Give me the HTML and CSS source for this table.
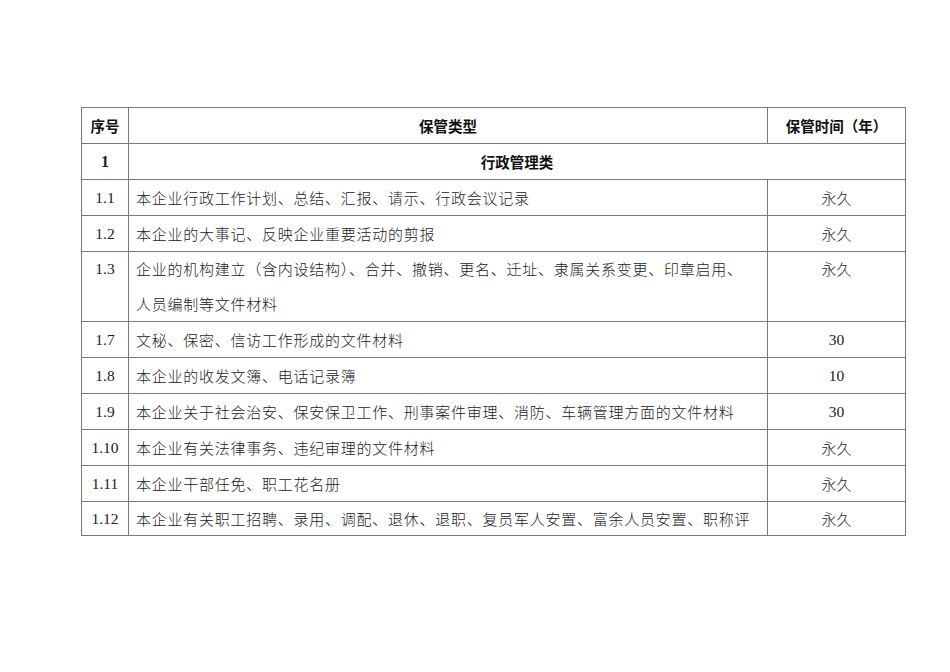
FILE: index.html
```html
<!DOCTYPE html>
<html lang="zh-CN">
<head>
<meta charset="utf-8">
<title>保管期限表</title>
<link rel="stylesheet" href="styles.css">
</head>
<body>
<div class="page">
<table class="grid">
  <colgroup>
    <col class="c-no">
    <col class="c-type">
    <col class="c-time">
  </colgroup>
  <tr class="head">
    <th>序号</th>
    <th>保管类型</th>
    <th>保管时间（年）</th>
  </tr>
  <tr class="group">
    <td class="no num bold">1</td>
    <td colspan="2" class="gtitle">行政管理类</td>
  </tr>
  <tr>
    <td class="no num">1.1</td>
    <td class="txt">本企业行政工作计划、总结、汇报、请示、行政会议记录</td>
    <td class="val">永久</td>
  </tr>
  <tr>
    <td class="no num">1.2</td>
    <td class="txt">本企业的大事记、反映企业重要活动的剪报</td>
    <td class="val">永久</td>
  </tr>
  <tr class="double">
    <td class="no num top">1.3</td>
    <td class="txt">企业的机构建立（含内设结构）、合并、撤销、更名、迁址、隶属关系变更、印章启用、<br>人员编制等文件材料</td>
    <td class="val top">永久</td>
  </tr>
  <tr>
    <td class="no num">1.7</td>
    <td class="txt">文秘、保密、信访工作形成的文件材料</td>
    <td class="val num">30</td>
  </tr>
  <tr>
    <td class="no num">1.8</td>
    <td class="txt">本企业的收发文簿、电话记录簿</td>
    <td class="val num">10</td>
  </tr>
  <tr>
    <td class="no num">1.9</td>
    <td class="txt">本企业关于社会治安、保安保卫工作、刑事案件审理、消防、车辆管理方面的文件材料</td>
    <td class="val num">30</td>
  </tr>
  <tr>
    <td class="no num">1.10</td>
    <td class="txt">本企业有关法律事务、违纪审理的文件材料</td>
    <td class="val">永久</td>
  </tr>
  <tr>
    <td class="no num">1.11</td>
    <td class="txt">本企业干部任免、职工花名册</td>
    <td class="val">永久</td>
  </tr>
  <tr class="last">
    <td class="no num">1.12</td>
    <td class="txt">本企业有关职工招聘、录用、调配、退休、退职、复员军人安置、富余人员安置、职称评</td>
    <td class="val">永久</td>
  </tr>
</table>
</div>
</body>
</html>
```
FILE: styles.css
```css
html, body {
  margin: 0;
  padding: 0;
  background: #ffffff;
}
.page {
  padding: 107px 0 0 81px;
  font-family: "Noto Sans CJK SC", sans-serif;
  color: #222;
}
.grid {
  border-collapse: collapse;
  table-layout: fixed;
  width: 824px;
  font-size: 15px;
}
.c-no { width: 47px; }
.c-type { width: 639px; }
.c-time { width: 138px; }
.grid th, .grid td {
  border: 1px solid #7a7a7a;
  padding: 0;
  height: 35px;
  line-height: 35px;
  vertical-align: middle;
  white-space: nowrap;
  overflow: hidden;
}
.grid th {
  font-weight: bold;
  font-size: 14.5px;
  text-align: center;
  color: #111;
}
.gtitle {
  text-align: center;
  font-weight: bold;
  font-size: 14.5px;
  color: #111;
}
.no {
  text-align: center;
}
.num {
  font-family: "Liberation Serif", serif;
  font-size: 15.5px;
}
.bold {
  font-weight: bold;
  font-size: 16px;
}
.txt {
  padding-left: 7px !important;
  letter-spacing: 0.75px;
  font-weight: 300;
}
.val {
  text-align: center;
  font-weight: 300;
}
.val.num {
  font-weight: normal;
}
.top {
  vertical-align: top !important;
}
.double td {
  height: 69px;
  line-height: 34.5px;
}
.last td {
  height: 33px;
  line-height: 33px;
}
```
